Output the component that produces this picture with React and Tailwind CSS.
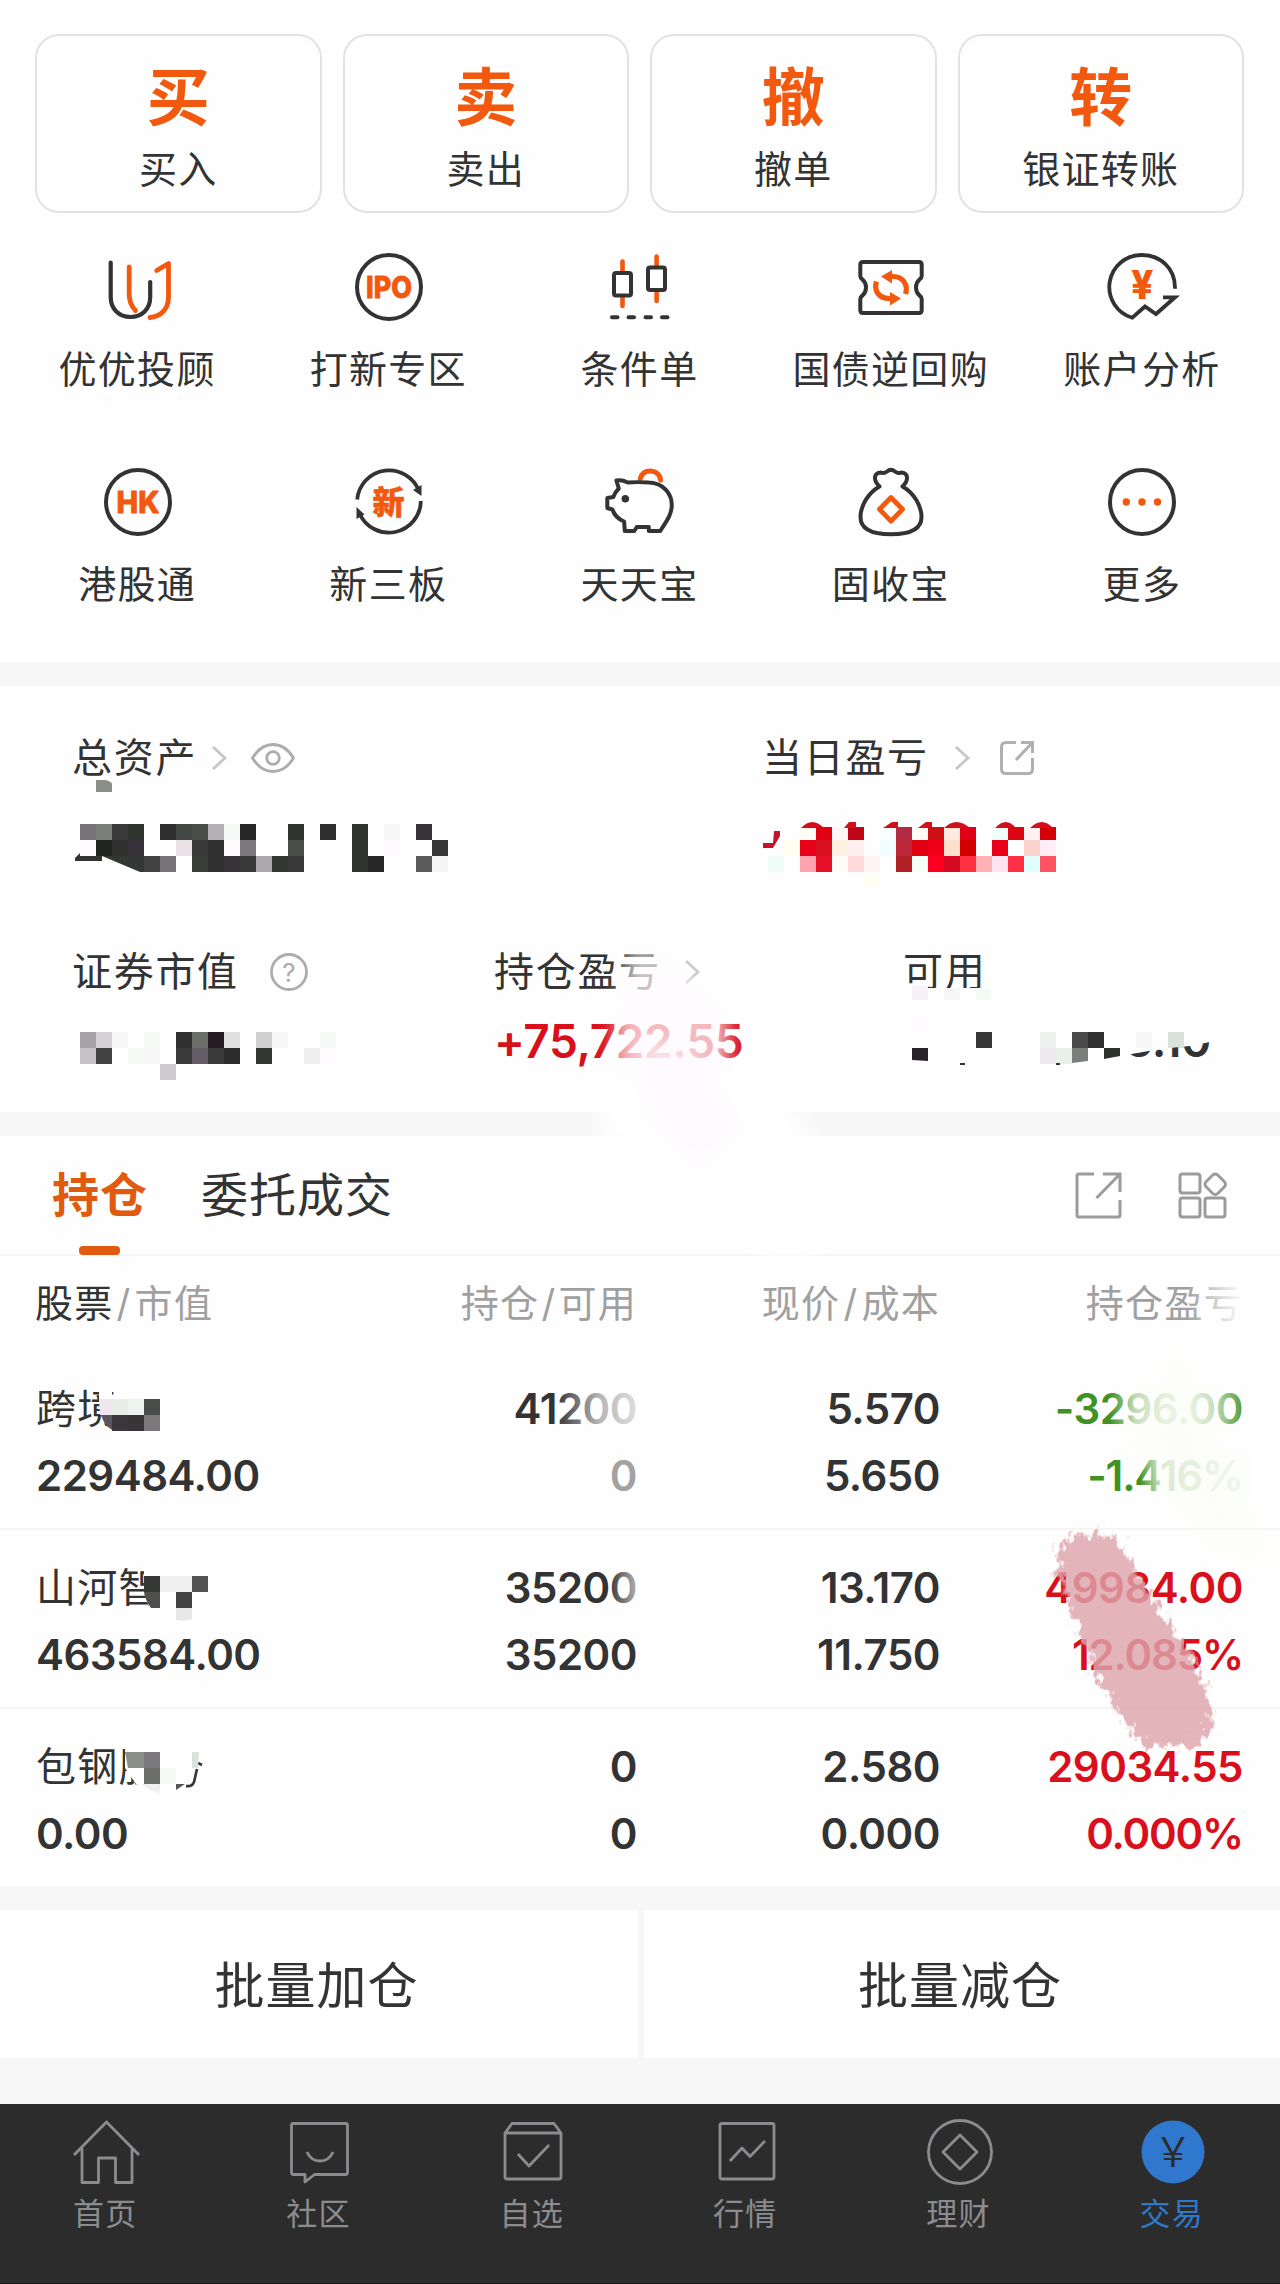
import React from 'react';

const INK = '#333333';
const ORANGE = '#f2590f';

const UuIcon = () => (
  <svg viewBox="0 0 80 80" className="w-20 h-20" fill="none" strokeWidth="4.2" strokeLinecap="round" strokeLinejoin="round">
    <path d="M12.7 15.5V50C12.7 62 21 70 32.5 70S52.2 62 52.2 50V35" stroke={INK} />
    <path d="M31.2 20V47C31.2 55 33 59 37.5 63.5" stroke={ORANGE} strokeWidth="4.8" />
    <path d="M58.7 23.5L70.5 16.5V50C70.5 61.5 63.5 69.5 52 70.5" stroke={ORANGE} strokeWidth="4.8" />
  </svg>
);

const CircleTextIcon = ({ label, width }) => (
  <svg viewBox="0 0 80 80" className="w-20 h-20" fill="none">
    <circle cx="40" cy="40" r="32" stroke={INK} strokeWidth="4" />
    <text
      x="40"
      y="50.8"
      textAnchor="middle"
      textLength={width}
      lengthAdjust="spacingAndGlyphs"
      fontFamily="Inter, sans-serif"
      fontWeight="800"
      fontSize="30"
      fill={ORANGE}
      stroke={ORANGE}
      strokeWidth="0.8"
      strokeLinejoin="round"
    >
      {label}
    </text>
  </svg>
);

const CandleIcon = () => (
  <svg viewBox="0 0 80 80" className="w-20 h-20" fill="none" strokeLinecap="round">
    <path d="M22.5 14.5V24M22.5 50V59M56.6 9.5V18M56.6 45V54" stroke={ORANGE} strokeWidth="4.6" />
    <rect x="14" y="26" width="17" height="22.5" rx="2" stroke={INK} strokeWidth="4" />
    <rect x="48" y="20.5" width="17" height="22.5" rx="2" stroke={INK} strokeWidth="4" />
    <path d="M12 70.2H17.500M28.500 70.2H34M45.500 70.2H51M62 70.2H67.500" stroke={INK} strokeWidth="4" />
  </svg>
);

const TicketIcon = () => (
  <svg viewBox="0 0 80 80" className="w-20 h-20" fill="none" strokeLinejoin="round">
    <path
      d="M12 15H68Q70.7 15 70.7 18V29Q70.7 31 68.5 32.5Q65 35.5 65 40.5T68.5 48.5Q70.7 50 70.7 52V63Q70.7 66 68 66H12Q9.3 66 9.3 63V52Q9.3 50 11.5 48.5Q15 45.5 15 40.5T11.5 32.5Q9.3 31 9.3 29V18Q9.3 15 12 15Z"
      stroke={INK}
      strokeWidth="4"
    />
    <path d="M36 29.5H42C52 29.5 57.5 38 54.5 47" stroke={ORANGE} strokeWidth="5.2" />
    <path d="M30 29.5L41 23V36.5Z" fill={ORANGE} />
    <path d="M44 51.5H38C28 51.5 22.5 43.5 25.5 34.5" stroke={ORANGE} strokeWidth="5.2" />
    <path d="M50 51.5L39 45V58.5Z" fill={ORANGE} />
  </svg>
);

const AnalysisIcon = () => (
  <svg viewBox="0 0 80 80" className="w-20 h-20" fill="none">
    <path d="M73 41.7C73.5 21 58 8 40 8A32 32 0 0 0 30.3 70.7L43 59.5L54 67L73 50.3H61" stroke={INK} strokeWidth="3.8" strokeLinejoin="miter" />
    <text x="40.4" y="51.500" textAnchor="middle" fontFamily="Inter, sans-serif" fontWeight="800" fontSize="39" fill={ORANGE}>
      ¥
    </text>
  </svg>
);

const NewBoardIcon = () => (
  <svg viewBox="0 0 80 80" className="w-20 h-20" fill="none" strokeWidth="3.8">
    <path d="M8.2 37.5A32 32 0 0 1 70 29" stroke={INK} />
    <path d="M71.8 39A32 32 0 0 1 10.5 51.5" stroke={INK} />
    <path d="M64 28L72.5 23V34Z" fill={INK} />
    <path d="M15.5 52.5L7.5 45V57Z" fill={INK} />
    <text x="39.500" y="51.5" textAnchor="middle" fontFamily="'Noto Sans CJK SC', sans-serif" fontWeight="900" fontSize="32" fill={ORANGE} stroke={ORANGE} strokeWidth="0.6">
      新
    </text>
  </svg>
);

const PigIcon = () => (
  <svg viewBox="0 0 80 80" className="w-20 h-20" fill="none" strokeLinejoin="round" strokeLinecap="round">
    <g transform="translate(-1.200 0)">
      <path d="M41.5 16.5C43 11 46.5 9 51.5 9S61 12 61.8 18" stroke={ORANGE} strokeWidth="5" />
      <path
        d="M17.6 18.5C20 18 25 18.5 29 20.5C35 20 42 20 50 20.5C65 21 73 32 73 43C73 53 67 60 61.5 69H50V65H38L35.5 69H26L25.3 59.5C19 57 15.5 53 13.6 47.5L8.5 46V36L14.5 35C15.5 32 17.5 29 20 26.5Z"
        stroke={INK}
        strokeWidth="4"
      />
      <circle cx="26.5" cy="36.8" r="3.8" fill={INK} />
    </g>
  </svg>
);

const BagIcon = () => (
  <svg viewBox="0 0 80 80" className="w-20 h-20" fill="none" strokeLinejoin="round">
    <path
      d="M28.5 24.5C22 18 22.5 11 30 10.5C32 11.5 34 11 36 9.5C38.5 7.5 41.5 7.5 44 9.5C46 11 48 11.5 50 10.5C57.500 11 58 18 51.500 24.500C63 31 70.500 44 70.500 55C70.500 67 59 72.300 40 72.300S9.500 67 9.500 55C9.500 44 17 31 28.500 24.500Z"
      stroke={INK}
      strokeWidth="4"
    />
    <path d="M40 35.500L51.500 47.300L40 59.200L28.500 47.300Z" stroke={ORANGE} strokeWidth="4.8" />
  </svg>
);

const MoreIcon = () => (
  <svg viewBox="0 0 80 80" className="w-20 h-20" fill="none">
    <circle cx="40" cy="40" r="32" stroke={INK} strokeWidth="4" />
    <circle cx="24.3" cy="40" r="3.7" fill={ORANGE} />
    <circle cx="40" cy="40" r="3.7" fill={ORANGE} />
    <circle cx="55.5" cy="40" r="3.7" fill={ORANGE} />
  </svg>
);

const Chevron = () => (
  <svg viewBox="0 0 16 26" className="w-4 h-[26px]" fill="none" stroke="#c6c6c6" strokeWidth="2.8">
    <path d="M2 2L14 13L2 24" />
  </svg>
);

const EyeIcon = () => (
  <svg viewBox="0 0 44 32" className="w-11 h-8" fill="none" stroke="#acacac" strokeWidth="2.8">
    <path d="M1.500 16C7 7 14 2.500 22 2.500S37 7 42.500 16C37 25 30 29.500 22 29.500S7 25 1.500 16Z" />
    <circle cx="22" cy="16" r="6.300" />
  </svg>
);

const ShareIcon = () => (
  <svg viewBox="0 0 36 36" className="w-9 h-9" fill="none" stroke="#b0b0b0" strokeWidth="3">
    <path d="M17 2.500H7Q2.500 2.500 2.500 7V29Q2.500 33.500 7 33.500H29Q33.500 33.500 33.500 29V18" />
    <path d="M22 2.500H33.500V13M33.500 2.500L17 20" />
  </svg>
);

const ExportIcon = () => (
  <svg viewBox="0 0 48 48" className="w-12 h-12" fill="none" stroke="#9b9b9b" strokeWidth="3">
    <path d="M20 3H5Q3 3 3 5V44Q3 46 5 46H44Q46 46 46 44V29" />
    <path d="M29 3H46V21M46 3L22.500 27" />
  </svg>
);

const GridIcon = () => (
  <svg viewBox="0 0 52 48" className="w-[52px] h-12" fill="none" stroke="#9b9b9b" strokeWidth="3">
    <rect x="3" y="3" width="20" height="19" rx="2.500" />
    <rect x="3" y="27" width="20" height="19" rx="2.500" />
    <rect x="28" y="27" width="20" height="19" rx="2.500" />
    <rect x="30" y="5" width="16.500" height="16.500" rx="3.500" transform="rotate(45 38.250 13.250)" />
  </svg>
);

const shortcuts = [
  { label: '优优投顾', icon: <UuIcon /> },
  { label: '打新专区', icon: <CircleTextIcon label="IPO" width="46" /> },
  { label: '条件单', icon: <CandleIcon /> },
  { label: '国债逆回购', icon: <TicketIcon /> },
  { label: '账户分析', icon: <AnalysisIcon /> },
  { label: '港股通', icon: <CircleTextIcon label="HK" width="43" /> },
  { label: '新三板', icon: <NewBoardIcon /> },
  { label: '天天宝', icon: <PigIcon /> },
  { label: '固收宝', icon: <BagIcon /> },
  { label: '更多', icon: <MoreIcon /> },
];

const actions = [
  { mark: '买', label: '买入' },
  { mark: '卖', label: '卖出' },
  { mark: '撤', label: '撤单' },
  { mark: '转', label: '银证转账' },
];

// Hidden values are drawn as 16px tiles; [column, row, color]
const totalTiles = [
  [0, 0, '#757375'], [1, 0, '#7b7f79'], [2, 0, '#3a3a3a'], [3, 0, '#30342f'], [5, 0, '#2f2f2f'], [6, 0, '#434743'],
  [7, 0, '#4a4e4a'], [8, 0, '#b4b2b5'], [9, 0, '#f6fbf7'], [10, 0, '#272727'], [13, 0, '#303430'], [15, 0, '#2f2f2f'],
  [17, 0, '#303430'], [19, 0, '#f7f7f7'], [21, 0, '#373339'],
  [0, 1, '#fffbff'], [1, 1, '#222522'], [2, 1, '#303030'], [3, 1, '#373139'], [6, 1, '#e8e2e7'], [7, 1, '#393939'],
  [8, 1, '#303030'], [9, 1, '#fffafe'], [10, 1, '#7c797c'], [13, 1, '#4a4e4a'], [17, 1, '#303430'], [19, 1, '#fefafe'],
  [22, 1, '#373737'],
  [4, 2, '#434343'], [5, 2, '#757375'], [7, 2, '#393c39'], [8, 2, '#303030'], [9, 2, '#373339'], [10, 2, '#393939'],
  [11, 2, '#acaaad'], [12, 2, '#343634'], [13, 2, '#393939'], [17, 2, '#303430'], [18, 2, '#272727'], [21, 2, '#5a5a5a'],
  [22, 2, '#f5f5f5'],
];

const dayTiles = [
  [2, 0, '#fffcf5'], [3, 0, '#e00010'], [4, 0, '#fff7f5'], [5, 0, '#bf0516'], [7, 0, '#f8fffe'], [8, 0, '#b42a42'],
  [9, 0, '#fffcf5'], [10, 0, '#cc1014'], [11, 0, '#ffeae2'], [12, 0, '#e00018'], [14, 0, '#f0fff8'], [15, 0, '#db0612'],
  [16, 0, '#fff0f1'], [17, 0, '#d40008'],
  [1, 1, '#fffff0'], [2, 1, '#e80018'], [3, 1, '#d81020'], [4, 1, '#fff0e2'], [5, 1, '#fff0ee'], [7, 1, '#f2fdff'],
  [8, 1, '#bc2838'], [9, 1, '#e00010'], [10, 1, '#f00018'], [11, 1, '#fde0cc'], [12, 1, '#d40000'], [14, 1, '#e80018'],
  [16, 1, '#fdd4cd'], [17, 1, '#ffeef4'],
  [0, 2, '#effdf8'], [2, 2, '#ffa4ae'], [3, 2, '#e41028'], [4, 2, '#fffcf5'], [5, 2, '#ffd9dc'], [6, 2, '#fff3f5'],
  [8, 2, '#b02024'], [9, 2, '#f6fff5'], [10, 2, '#ff0020'], [11, 2, '#d40820'], [12, 2, '#ff3040'], [13, 2, '#ffb2b4'],
  [14, 2, '#fde4ef'], [15, 2, '#ff3044'], [16, 2, '#e2ffff'], [17, 2, '#ff5464'],
  [6, 3, '#fffff5'],
];

const marketTiles = [
  [0, 0, '#a5a3a7'], [1, 0, '#d4d2d5'], [2, 0, '#f7f7f7'], [4, 0, '#f6fbf7'], [6, 0, '#303030'], [7, 0, '#6b6d69'],
  [8, 0, '#241d24'], [9, 0, '#e0e0e0'], [11, 0, '#d0d0d0'], [12, 0, '#f7f7f7'], [15, 0, '#f6fbf8'],
  [0, 1, '#c6c4c7'], [1, 1, '#434343'], [3, 1, '#f6fbf8'], [4, 1, '#f6f6f6'], [6, 1, '#3a3a3a'], [7, 1, '#655d66'],
  [8, 1, '#3a3a3a'], [9, 1, '#2b2b2b'], [11, 1, '#343634'], [14, 1, '#eeeeee'], [15, 1, '#fffbff'],
  [5, 2, '#cecccf'],
];

const cashTiles = [
  [0, -1, '#fffbff'],
  [4, 0, '#373737'], [8, 0, '#edf2ee'], [10, 0, '#4a4a4a'], [11, 0, '#303030'], [14, 0, '#f7f7f7'], [16, 0, '#dbe2dc'],
  [8, 1, '#eee9ef'], [9, 1, '#e9efe9'],
];

const Tiles = ({ cells, x, y }) =>
  cells.map(([col, row, color]) => (
    <rect key={`${col}:${row}`} x={x + col * 16} y={y + row * 16} width="16" height="16" fill={color} shapeRendering="crispEdges" />
  ));

const holdings = [
  {
    name: '跨境',
    value: '229484.00',
    qty: '41200',
    usable: '0',
    price: '5.570',
    cost: '5.650',
    profit: '-3296.00',
    rate: '-1.416%',
    tone: 'text-[#3f9224]',
    mask: (
      <svg viewBox="96 1386 112 48" className="absolute left-[60px] top-0 w-28 h-12">
        <path d="M99 1400H160V1432H112L102 1420Z" fill="#fefefe" />
        <path d="M99 1386H112V1400H99Z" fill="#fefefe" />
        <path d="M99 1400H112V1416H100Z" fill="#eee8ee" />
        <path d="M101 1416H112V1431Q104 1426 101 1416Z" fill="#5a575a" />
        <Tiles x={112} y={1400} cells={[[0, 0, '#e8ede8'], [1, 0, '#edf3ee'], [2, 0, '#4a4e4a'], [0, 1, '#3a363a'], [1, 1, '#373537'], [2, 1, '#7b797c']]} />
      </svg>
    ),
  },
  {
    name: '山河智',
    value: '463584.00',
    qty: '35200',
    usable: '35200',
    price: '13.170',
    cost: '11.750',
    profit: '49984.00',
    rate: '12.085%',
    tone: 'text-[#d9101c]',
    mask: (
      <svg viewBox="144 1564 80 60" className="absolute left-[108px] top-0 w-20 h-[60px]">
        <path d="M144 1564H208V1610H150L144 1592Z" fill="#fefefe" />
        <path d="M144 1592H160V1608H151Q145 1600 144 1592Z" fill="#4d504d" />
        <path d="M176 1608H192V1619Q184 1622 176 1620Z" fill="#e8e8e8" />
        <Tiles x={144} y={1576} cells={[[0, 0, '#373737'], [1, 0, '#f0f0f0'], [2, 0, '#f0f0f0'], [3, 0, '#525252'], [2, 1, '#434343']]} />
      </svg>
    ),
  },
  {
    name: '包钢股份',
    value: '0.00',
    qty: '0',
    usable: '0',
    price: '2.580',
    cost: '0.000',
    profit: '29034.55',
    rate: '0.000%',
    tone: 'text-[#d9101c]',
    mask: (
      <svg viewBox="120 1743 100 60" className="absolute left-[84px] top-0 w-[100px] h-[60px]">
        <path d="M125 1740H206V1792L160 1794L136 1784L125 1768Z" fill="#fefefe" />
        <path d="M198 1763L202 1765M197 1769L194 1782Q192 1787 186 1786" fill="none" stroke="#333333" strokeWidth="2.6" />
        <path d="M125 1752H144V1768H128Z" fill="#8c8e8b" />
        <path d="M192 1752H199L198 1768H192Z" fill="#dbe2dc" />
        <path d="M142 1784H160V1793Q150 1792 142 1784Z" fill="#efefef" />
        <path d="M176 1784H185L176 1790Z" fill="#555555" />
        <Tiles x={144} y={1752} cells={[[0, 0, '#7c797c'], [0, 1, '#6b6d69'], [1, 1, '#f6fbf8']]} />
      </svg>
    ),
  },
];

const HoldingRow = ({ item, last }) => (
  <div
    className={`grid h-[179px] grid-cols-[300px_301px_303px_303px] content-start gap-y-[19px] pl-9 pt-[34px] text-[42px] leading-[48px] font-semibold tracking-[-0.5px] ${
      last ? '' : 'border-b-2 border-[#f5f5f5]'
    }`}
  >
    <div className="relative text-[40px] font-normal tracking-[1.3px]">
      {item.name}
      {item.mask}
    </div>
    <div className="text-right">{item.qty}</div>
    <div className="text-right">{item.price}</div>
    <div className={`text-right ${item.tone}`}>{item.profit}</div>
    <div>{item.value}</div>
    <div className="text-right">{item.usable}</div>
    <div className="text-right">{item.cost}</div>
    <div className={`text-right tracking-[-1.2px] ${item.tone}`}>{item.rate}</div>
  </div>
);

const tabs = [
  {
    label: '首页',
    icon: <path d="M3 41L35.500 8L68 41M11 34V68.500H27.500V44H44.500V68.500H61V34" />,
  },
  {
    label: '社区',
    icon: (
      <>
        <path d="M10 9.500H61.500Q63.500 9.500 63.500 11.500V58.500Q63.500 60.500 61.500 60.500H30.500L21 68V60.500H9.500Q7.500 60.500 7.500 58.500V11.500Q7.500 9.500 9.500 9.500Z" />
        <path d="M23 38Q27 47 36 47T49 38" />
      </>
    ),
  },
  {
    label: '自选',
    icon: (
      <>
        <path d="M8 19L15 9.500H57L64 19V63Q64 65 62 65H10Q8 65 8 63ZM8 19H64" />
        <path d="M21 40L32 52L52 31" />
      </>
    ),
  },
  {
    label: '行情',
    icon: (
      <>
        <rect x="9" y="9.500" width="54" height="55.500" rx="2" />
        <path d="M19 47L31 34L39 42.500L54 27" />
      </>
    ),
  },
  {
    label: '理财',
    icon: (
      <>
        <circle cx="36" cy="38" r="31.500" />
        <path d="M36 21L53 38L36 55L19 38Z" />
      </>
    ),
  },
  {
    label: '交易',
    active: true,
    icon: (
      <>
        <circle cx="36" cy="38" r="31.500" fill="#2f78ce" stroke="none" />
        <text x="36" y="53" textAnchor="middle" textLength="25" lengthAdjust="spacingAndGlyphs" fontFamily="Inter, sans-serif" fontSize="41" fontWeight="300" fill="#2c2c2c" stroke="none">
          ¥
        </text>
      </>
    ),
  },
];

const BrushMarks = () => (
  <svg viewBox="0 0 1280 2284" className="pointer-events-none absolute left-0 top-0 h-[2284px] w-[1280px]">
    <defs>
      <filter id="soft" x="-20%" y="-20%" width="140%" height="140%">
        <feGaussianBlur stdDeviation="9" />
      </filter>
      {/* dry brush: fine speckle that only eats into the stroke edge */}
      <filter id="rough" x="-20%" y="-10%" width="140%" height="120%">
        <feGaussianBlur in="SourceAlpha" stdDeviation="9" result="edge" />
        <feTurbulence type="fractalNoise" baseFrequency="0.16 0.1" numOctaves="3" seed="7" result="n" />
        <feColorMatrix in="n" type="matrix" values="0 0 0 0 0  0 0 0 0 0  0 0 0 0 0  1 0 0 0 0" result="na" />
        <feComposite in="edge" in2="na" operator="arithmetic" k1="0" k2="5" k3="5" k4="-4.300" result="mask" />
        <feFlood floodColor="#dda3ab" floodOpacity="0.82" />
        <feComposite in2="mask" operator="in" />
        <feGaussianBlur stdDeviation="0.7" />
      </filter>
      <linearGradient id="fadeRight">
        <stop offset="0" stopColor="#fefefe" stopOpacity="0" />
        <stop offset="0.5" stopColor="#fefefe" stopOpacity="0.65" />
        <stop offset="1" stopColor="#fefefe" stopOpacity="0.88" />
      </linearGradient>
      <linearGradient id="fadeOut">
        <stop offset="0" stopColor="#fefefe" stopOpacity="0" />
        <stop offset="1" stopColor="#fefefe" stopOpacity="1" />
      </linearGradient>
      <linearGradient id="fadeGain">
        <stop offset="0" stopColor="#fefefe" stopOpacity="0" />
        <stop offset="0.18" stopColor="#fdfefb" stopOpacity="0.68" />
        <stop offset="0.5" stopColor="#fdfefb" stopOpacity="0.88" />
        <stop offset="0.75" stopColor="#fdfefb" stopOpacity="0.7" />
        <stop offset="1" stopColor="#fefefe" stopOpacity="0" />
      </linearGradient>
      <linearGradient id="fadeRate">
        <stop offset="0" stopColor="#fdfefb" stopOpacity="0" />
        <stop offset="0.2" stopColor="#fdfefb" stopOpacity="0.75" />
        <stop offset="1" stopColor="#fdfefb" stopOpacity="0.94" />
      </linearGradient>
    </defs>
    <path d="M630 945L668 955L728 1018L728 1075L612 1075L618 1010Z" fill="#fefcfe" opacity="0.72" filter="url(#soft)" />
    <path d="M600 1095H790L815 1150V1262H770L700 1170L600 1140Z" fill="#fefefe" filter="url(#soft)" />
    <path d="M640 1040L690 1050L735 1130L700 1165L650 1110Z" fill="#fdf8fd" opacity="0.7" filter="url(#soft)" />
    <rect x="555" y="1385" width="90" height="46" fill="url(#fadeRight)" />
    <rect x="600" y="1452" width="44" height="46" fill="#fefefe" opacity="0.55" />
    <rect x="608" y="1565" width="60" height="46" fill="url(#fadeRight)" />
    <rect x="1186" y="1278" width="58" height="50" fill="url(#fadeOut)" />
    <rect x="1110" y="1385" width="138" height="46" fill="url(#fadeGain)" />
    <rect x="1140" y="1452" width="110" height="46" fill="url(#fadeRate)" />
    <path d="M1180 1350L1270 1560L1210 1550L1130 1440Z" fill="#fbfdf3" opacity="0.35" filter="url(#soft)" />
    <path
      d="M1056 1567L1062 1545L1076 1530L1088 1544L1098 1530L1114 1536L1134 1570L1158 1610L1187 1650L1203 1683L1214 1727L1194 1749L1166 1742L1148 1750L1122 1717L1097 1673L1079 1627L1065 1590Z"
      filter="url(#rough)"
    />
  </svg>
);

const App = () => {
  return (
    <div className="relative flex h-[2284px] w-[1280px] flex-col overflow-hidden bg-[#f7f7f7] font-[Inter,'Noto_Sans_CJK_SC',sans-serif] text-[#333333]">
      <section className="h-[662px] bg-[#fefefe] pt-[34px]">
        <div className="grid grid-cols-4 gap-[21px] pl-[35px] pr-9">
          {actions.map((a) => (
            <div key={a.label} className="flex h-[179px] flex-col items-center rounded-3xl border-2 border-[#e2e2e2] pt-[29px]">
              <div className="text-[63px] leading-[64px] font-bold text-[#f2590f]">{a.mark}</div>
              <div className="mt-[20px] text-[38px] leading-[40px] tracking-[1.3px]">{a.label}</div>
            </div>
          ))}
        </div>
        <div className="mt-[34px] grid grid-cols-5 gap-y-[73px] px-3">
          {shortcuts.map((s) => (
            <div key={s.label} className="flex flex-col items-center">
              {s.icon}
              <div className="mt-[22px] pr-[1px] text-[38px] leading-[40px] tracking-[1.3px]">{s.label}</div>
            </div>
          ))}
        </div>
      </section>

      <section className="mt-6 h-[426px] bg-[#fefefe] pt-[48px] text-[40px] leading-[48px] tracking-[1.700px]">
        <div className="grid grid-cols-[690px_1fr] pl-[72px]">
          <div>
            <div className="flex h-12 items-center">
              <span>总资产</span>
              <span className="ml-[14px]"><Chevron /></span>
              <span className="ml-6"><EyeIcon /></span>
            </div>
            <svg viewBox="72 782 400 90" className="h-[90px] w-[400px] overflow-visible">
              <path d="M96 780H106Q112 782 112 784V792H96Z" fill="#8c8e8b" />
              <path d="M75 858L82 851L87 852L85 856H102V861H75Z" fill="#333333" />
              <path d="M102 856H144V872H140Z" fill="#343834" />
              <Tiles cells={totalTiles} x={80} y={824} />
            </svg>
          </div>
          <div>
            <div className="flex h-12 items-center">
              <span>当日盈亏</span>
              <span className="ml-[25px]"><Chevron /></span>
              <span className="ml-[29px]"><ShareIcon /></span>
            </div>
            <svg viewBox="762 782 400 90" className="h-[90px] w-[400px] overflow-visible">
              <Tiles cells={dayTiles} x={768} y={824} />
              <path d="M766 824H1060V827H766Z" fill="#fefefe" />
              <path
                d="M801 828Q812 816 824 828ZM844 828L849 822H856V828ZM883 828L892 822H898V828ZM918 828L926 822H932V828ZM944 828Q956 816 970 828ZM995 828Q1006 816 1016 828ZM1030 828Q1042 816 1053 828Z"
                fill="#d2101c"
              />
              <path d="M763 843H773L774 831H780V836L773 848H763Z" fill="#c8142a" />
            </svg>
          </div>
        </div>
        <div className="mt-[76px] grid grid-cols-[422px_409px_1fr] pl-[72px]">
          <div>
            <div className="flex h-12 items-center">
              <span>证券市值</span>
              <svg viewBox="0 0 40 40" className="ml-[30px] h-10 w-10" fill="none">
                <circle cx="20" cy="20" r="17.500" stroke="#acacac" strokeWidth="2.8" />
                <text x="20" y="29.500" textAnchor="middle" fontFamily="Inter, sans-serif" fontSize="26" letterSpacing="0" fill="#acacac">
                  ?
                </text>
              </svg>
            </div>
            <svg viewBox="72 1016 300 64" className="mt-5 h-16 w-[300px]">
              <Tiles cells={marketTiles} x={80} y={1032} />
            </svg>
          </div>
          <div>
            <div className="flex h-12 items-center">
              <span>持仓盈亏</span>
              <span className="ml-[23px]"><Chevron /></span>
            </div>
            <div className="mt-5 text-[46px] leading-[50px] font-semibold tracking-[-0.4px] text-[#d9101c]">+75,722.55</div>
          </div>
          <div>
            <div className="h-12">可用</div>
            <svg viewBox="903 1016 340 64" className="mt-5 h-16 w-[340px] overflow-visible">
              <clipPath id="tail">
                <path d="M1120 1056L1160 1049L1190 1046L1215 1041V1064H1120Z" />
              </clipPath>
              <path d="M900 988H990V998H900Z" fill="#fefefe" />
              <path d="M912 986H928V1000H912Z" fill="#f7f2f6" />
              <path d="M944 988H960V1000H944Z" fill="#f7f7f7" />
              <path d="M976 989H991V1000H976Z" fill="#f4faf5" />
              <Tiles cells={cashTiles} x={912} y={1032} />
              <path d="M912 1048H928V1061L912 1060Z" fill="#272329" />
              <path d="M1072 1048H1088V1061L1072 1063Z" fill="#7b7f7b" />
              <path d="M1104 1048H1120V1056L1104 1059Z" fill="#2f332f" />
              <path d="M960 1063H965V1065H960ZM1056 1063H1060V1065H1056Z" fill="#333333" />
              <text x="1211" y="1057" textAnchor="end" fontFamily="Inter, sans-serif" fontSize="46" fontWeight="600" letterSpacing="-0.4" fill="#333333" clipPath="url(#tail)">
                5.10
              </text>
            </svg>
          </div>
        </div>
      </section>

      <section className="mt-6 h-[750px] bg-[#fefefe]">
        <div className="flex h-[120px] items-center border-b-2 border-[#f4f4f4] pr-[51px] pl-[52px] text-[47px] tracking-[1px]">
          <div className="relative flex h-full items-center font-bold text-[#e05a10]">
            持仓
            <span className="absolute bottom-[-1px] left-[27px] h-[9px] w-[41px] rounded-[4px] bg-[#e05a10]" />
          </div>
          <div className="ml-[53px]">委托成交</div>
          <div className="ml-auto flex gap-[55px]">
            <ExportIcon />
            <GridIcon />
          </div>
        </div>
        <div className="grid h-[95px] grid-cols-[301px_301px_303px_303px] items-center pl-[35px] text-[38px] tracking-[1.300px] text-[#a0a0a0]">
          <div>
            <span className="text-[#333333]">股票</span>
            <span className="mx-[3px]">/</span>市值
          </div>
          <div className="text-right">持仓<span className="mx-[2px]">/</span>可用</div>
          <div className="text-right">现价<span className="mx-[3px]">/</span>成本</div>
          <div className="text-right">持仓盈亏</div>
        </div>
        {holdings.map((h, i) => (
          <HoldingRow key={h.name} item={h} last={i === holdings.length - 1} />
        ))}
      </section>

      <section className="mt-6 grid h-[148px] grid-cols-[638px_1fr] gap-x-[6px] text-[50px] tracking-[1px]">
        <button className="bg-[#fefefe] pr-[5px] pt-[4px]">批量加仓</button>
        <button className="bg-[#fefefe] pr-1 pt-[4px]">批量减仓</button>
      </section>

      <nav className="mt-auto grid h-[180px] grid-cols-6 border-b border-[#161616] bg-[#2c2c2c] pt-[10px]">
        {tabs.map((t) => (
          <div key={t.label} className={`flex flex-col items-center ${t.active ? 'text-[#3079ca]' : 'text-[#8c8c90]'}`}>
            <svg viewBox="0 0 72 76" className="h-[76px] w-[72px]" fill="none" stroke="#8c8c90" strokeWidth="2.8" strokeLinejoin="round">
              {t.icon}
            </svg>
            <div className="mt-[6px] pr-[3px] text-[31px] leading-[36px] tracking-[1.200px]">{t.label}</div>
          </div>
        ))}
      </nav>

      <BrushMarks />
    </div>
  );
};

export default App;
